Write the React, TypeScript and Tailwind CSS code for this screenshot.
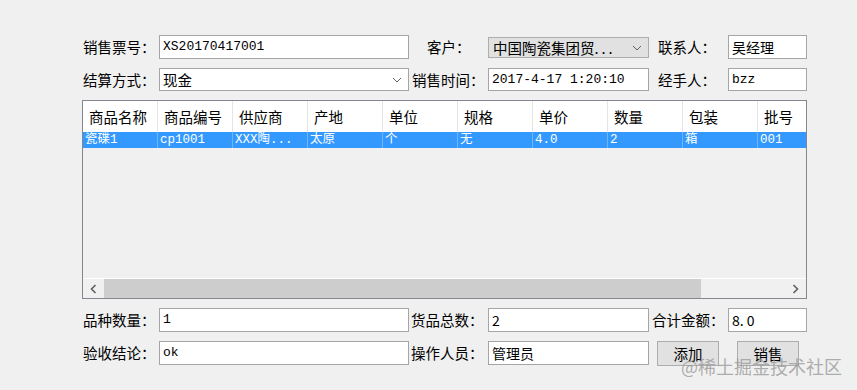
import type { ReactNode } from 'react';

const CJK = '"Noto Sans CJK SC", "Noto Sans", sans-serif';
const MONO = '"Liberation Mono", "Noto Sans CJK SC", monospace';

const COLUMNS = ['商品名称', '商品编号', '供应商', '产地', '单位', '规格', '单价', '数量', '包装', '批号'];
const ROW = ['瓷碟1', 'cp1001', 'XXX陶...', '太原', '个', '无', '4.0', '2', '箱', '001'];

// 文本框
function TextBox({ w, value, mono }: { w: string; value: string; mono?: boolean }) {
  return (
    <div
      className={`${w} h-full bg-white border border-[#a5a5a5] flex items-center px-[3px] text-[#000] ${mono ? 'text-[13px]' : 'text-[14px]'}`}
      style={{ fontFamily: mono ? MONO : CJK }}
    >
      {value}
    </div>
  );
}

function Label({ w, pl, children }: { w: string; pl: string; children: ReactNode }) {
  return (
    <div className={`${w} ${pl} h-full flex items-center text-[14.5px] text-black whitespace-nowrap`}>
      {children}
    </div>
  );
}

function Chevron({ className }: { className?: string }) {
  return (
    <svg width="10" height="6" viewBox="0 0 10 6" className={className}>
      <polyline points="1,1 5,5 9,1" fill="none" stroke="#606060" strokeWidth="1" />
    </svg>
  );
}

function Button({ children }: { children: ReactNode }) {
  return (
    <div className="w-[62px] h-[25px] bg-[#e1e1e1] border border-[#adadad] flex items-center justify-center text-[14.5px] text-black">
      {children}
    </div>
  );
}

export default function App() {
  return (
    <div
      className="relative w-[857px] h-[390px] bg-[#f0f0f0] pl-[82px] pt-[35px] overflow-hidden"
      style={{ fontFamily: CJK }}
    >
      {/* 第一行 */}
      <div className="flex h-[24px]">
        <Label w="w-[77px]" pl="pl-[1px]">销售票号：</Label>
        <TextBox w="w-[250px]" value="XS20170417001" mono />
        <Label w="w-[79px]" pl="pl-[18px]">客户：</Label>
        <div className="w-[161px] h-[21px] mt-[2px] bg-[#e1e1e1] border border-[#adadad] flex items-center justify-between pl-[4px] pr-[6px] text-[14.5px] text-black">
          <span>
            中国陶瓷集团贸<span className="tracking-[3px]">...</span>
          </span>
          <Chevron />
        </div>
        <Label w="w-[79px]" pl="pl-[9px]">联系人：</Label>
        <TextBox w="w-[79px]" value="吴经理" />
      </div>

      {/* 第二行 */}
      <div className="flex h-[23px] mt-[9px]">
        <Label w="w-[77px]" pl="pl-[1px]">结算方式：</Label>
        <div className="w-[250px] h-full bg-white border border-[#a5a5a5] flex items-center justify-between pl-[3px] pr-[6px] text-[14.5px] text-black">
          <span>现金</span>
          <Chevron />
        </div>
        <Label w="w-[79px]" pl="pl-[3px]">销售时间：</Label>
        <TextBox w="w-[161px]" value="2017-4-17 1:20:10" mono />
        <Label w="w-[79px]" pl="pl-[9px]">经手人：</Label>
        <TextBox w="w-[79px]" value="bzz" mono />
      </div>

      {/* 商品列表 */}
      <div className="w-[725px] h-[199px] mt-[9px] border border-[#828790] bg-[#f0f0f0] flex flex-col overflow-hidden">
        <div className="flex h-[31px] bg-white shrink-0">
          {COLUMNS.map((c) => (
            <div
              key={c}
              className="w-[75px] shrink-0 h-full border-r border-[#e5e5e5] flex items-center pl-[6px] text-[14.5px] text-black"
            >
              {c}
            </div>
          ))}
        </div>
        <div className="flex h-[16px] bg-[#3399ff] shrink-0">
          {ROW.map((c, i) => (
            <div
              key={i}
              className="w-[75px] shrink-0 h-full border-r border-[#6fb5fb] flex items-center pl-[2px] text-[12.5px] text-white leading-none whitespace-nowrap"
              style={{ fontFamily: MONO }}
            >
              {c}
            </div>
          ))}
        </div>
        <div className="flex-1" />
        {/* 横向滚动条 */}
        <div className="h-[20px] shrink-0 border-t border-white flex items-stretch bg-[#f0f0f0]">
          <div className="w-[21px] flex items-center justify-center">
            <svg width="7" height="10" viewBox="0 0 7 10">
              <polyline points="5.5,1 1.5,5 5.5,9" fill="none" stroke="#606060" strokeWidth="1.6" />
            </svg>
          </div>
          <div className="w-[597px] bg-[#cdcdcd]" />
          <div className="flex-1" />
          <div className="w-[21px] flex items-center justify-center">
            <svg width="7" height="10" viewBox="0 0 7 10">
              <polyline points="1.5,1 5.5,5 1.5,9" fill="none" stroke="#606060" strokeWidth="1.6" />
            </svg>
          </div>
        </div>
      </div>

      {/* 第三行 */}
      <div className="flex h-[24px] mt-[9px]">
        <Label w="w-[77px]" pl="pl-[1px]">品种数量：</Label>
        <TextBox w="w-[250px]" value="1" mono />
        <Label w="w-[79px]" pl="pl-[2px]">货品总数：</Label>
        <TextBox w="w-[161px]" value="2" />
        <Label w="w-[79px]" pl="pl-[3px]">合计金额：</Label>
        <TextBox w="w-[79px]" value="8. 0" />
      </div>

      {/* 第四行 */}
      <div className="flex h-[24px] mt-[9px]">
        <Label w="w-[77px]" pl="pl-[1px]">验收结论：</Label>
        <TextBox w="w-[250px]" value="ok" mono />
        <Label w="w-[79px]" pl="pl-[2px]">操作人员：</Label>
        <TextBox w="w-[161px]" value="管理员" />
        <div className="ml-[8px]">
          <Button>添加</Button>
        </div>
        <div className="ml-[18px]">
          <Button>销售</Button>
        </div>
      </div>

      {/* 水印 */}
      <div className="absolute left-[681px] top-[353px] text-[18px] text-[#9a9a9a]/80 whitespace-nowrap">
        @稀土掘金技术社区
      </div>
    </div>
  );
}
